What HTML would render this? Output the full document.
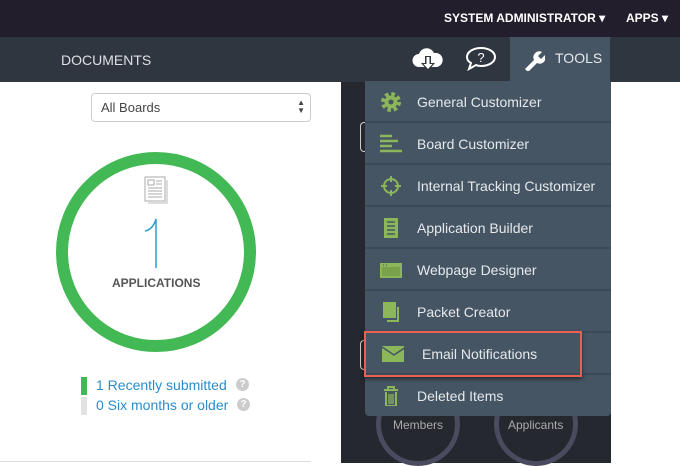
<!DOCTYPE html>
<html><head><style>
*{margin:0;padding:0;box-sizing:border-box}
body{width:680px;height:463px;overflow:hidden;background:#fff;font-family:"Liberation Sans",sans-serif;position:relative}
.top{position:absolute;left:0;top:0;width:680px;height:37px;background:#221e2b;color:#fff;font-size:12px;font-weight:bold}
.nav{position:absolute;left:0;top:37px;width:680px;height:45px;background:#2f363f}
.dark{position:absolute;left:341px;top:82px;width:270px;height:381px;background:#25282f}
.menu{position:absolute;left:365px;top:81px;width:246px;height:335px;background:#455563;border-radius:0 0 4px 4px}
.item{position:absolute;left:0;width:246px;height:42px;border-bottom:2px solid #3c4a57;color:#e6e9ec;font-size:14px;line-height:42px;padding-left:52px}
.ic{position:absolute;left:15px;top:11px;width:22px;height:20px}
</style></head><body>
<div class="top">
<span style="position:absolute;left:444px;top:11px">SYSTEM ADMINISTRATOR ▾</span>
<span style="position:absolute;left:626px;top:11px">APPS ▾</span>
</div>
<div class="nav">
<span style="position:absolute;left:61px;top:15px;color:#dde0e4;font-size:14px">DOCUMENTS</span>
<svg style="position:absolute;left:412px;top:10px" width="32" height="26" viewBox="0 0 32 26"><path d="M7 20a6.5 6.5 0 0 1 0-13 8 8 0 0 1 15-1 7 7 0 0 1 3 14z" fill="#fff"/><path d="M13 9h6v7h4l-7 8-7-8h4z" fill="#2f363f"/><path d="M14.5 10h3v7h3l-4.5 5-4.5-5h3z" fill="#fff"/></svg>
<svg style="position:absolute;left:465px;top:9px" width="32" height="26" viewBox="0 0 32 26"><path d="M16 2C8 2 2 6 2 11c0 3 2 5 4 6l-2 6 7-4c2 1 3 1 5 1 8 0 14-4 14-9S24 2 16 2z" fill="none" stroke="#fff" stroke-width="2"/><text x="16" y="16" fill="#fff" font-size="13" text-anchor="middle" font-family="Liberation Sans">?</text></svg>
<div style="position:absolute;left:510px;top:0;width:100px;height:45px;background:#455563">
<svg style="position:absolute;left:13px;top:12px" width="22" height="22" viewBox="0 0 22 22"><path d="M2 20l9-9a6 6 0 0 1 8-8l-4 4 3 3 4-4a6 6 0 0 1-8 8l-9 9z" fill="#fff"/></svg>
<span style="position:absolute;left:45px;top:13px;color:#e6e9ec;font-size:14px">TOOLS</span>
</div>
</div>
<div class="dark">
<div style="position:absolute;left:19px;top:40px;width:10px;height:30px;border:1px solid #ccc;border-right:none;border-radius:4px 0 0 4px"></div>
<div style="position:absolute;left:19px;top:258px;width:10px;height:30px;border:1px solid #ccc;border-right:none;border-radius:4px 0 0 4px"></div>
<div style="position:absolute;left:35px;top:300px;width:84px;height:84px;border:5px solid #4a4b5e;border-radius:50%"></div>
<div style="position:absolute;left:153px;top:300px;width:84px;height:84px;border:5px solid #4a4b5e;border-radius:50%"></div>
<span style="position:absolute;left:52px;top:336px;color:#aaa;font-size:12px">Members</span>
<span style="position:absolute;left:167px;top:336px;color:#aaa;font-size:12px">Applicants</span>
</div>
<div class="menu">
<div class="item" style="top:0"><svg class="ic" viewBox="0 0 22 20"><circle cx="11" cy="10" r="8" fill="none" stroke="#8cb65a" stroke-width="4" stroke-dasharray="3.5 2.8"/><circle cx="11" cy="10" r="6.5" fill="#8cb65a"/><circle cx="11" cy="10" r="2.5" fill="#455563"/></svg>General Customizer</div>
<div class="item" style="top:42px"><svg class="ic" viewBox="0 0 22 20"><path d="M0 2h12M0 7h18M0 12h12M0 17h22" stroke="#8cb65a" stroke-width="2.5"/></svg>Board Customizer</div>
<div class="item" style="top:84px"><svg class="ic" viewBox="0 0 22 20"><circle cx="11" cy="10" r="7" fill="none" stroke="#8cb65a" stroke-width="2"/><path d="M11 0v6M11 14v6M1 10h6M15 10h6" stroke="#8cb65a" stroke-width="2"/></svg>Internal Tracking Customizer</div>
<div class="item" style="top:126px"><svg class="ic" viewBox="0 0 22 20"><rect x="4" y="0" width="14" height="20" fill="#8cb65a"/><path d="M7 4h8M7 8h8M7 12h8M7 16h8" stroke="#455563" stroke-width="1.5"/></svg>Application Builder</div>
<div class="item" style="top:168px"><svg class="ic" viewBox="0 0 22 20"><rect x="0" y="3" width="22" height="15" fill="#8cb65a"/><rect x="2" y="7" width="18" height="9" fill="#7aa24c"/><path d="M3 5h1M6 5h1" stroke="#455563"/></svg>Webpage Designer</div>
<div class="item" style="top:210px"><svg class="ic" viewBox="0 0 22 20"><rect x="3" y="0" width="13" height="16" fill="#8cb65a"/><path d="M18 5v14H7" stroke="#8cb65a" stroke-width="2" fill="none"/></svg>Packet Creator</div>
<div class="item" style="top:252px"><svg class="ic" style="left:17px" viewBox="0 0 22 20"><rect x="0" y="2" width="24" height="16" fill="#8cb65a"/><path d="M0 3l12 8 12-8" stroke="#455563" stroke-width="1.5" fill="none"/></svg><span style="padding-left:5px">Email Notifications</span></div>
<div class="item" style="top:294px;border:none"><svg class="ic" viewBox="0 0 22 20"><path d="M4 4h14M8 4V1h6v3M6 6v14h10V6" stroke="#8cb65a" stroke-width="2" fill="none"/><path d="M9 8v10M11 8v10M13 8v10" stroke="#8cb65a" stroke-width="1.3"/></svg>Deleted Items</div>
</div>
<div style="position:absolute;left:364px;top:331px;width:218px;height:46px;border:2px solid #e8604f;box-shadow:0 2px 4px rgba(0,0,0,.5)"></div>
<div style="position:absolute;left:91px;top:93px;width:220px;height:29px;border:1px solid #ccc;border-radius:4px;font-size:13px;color:#444;padding:6px 9px">All Boards<span style="position:absolute;right:5px;top:5px;font-size:8px;line-height:8px">▲<br>▼</span></div>
<div style="position:absolute;left:56px;top:152px;width:200px;height:200px;border:12px solid #43b955;border-radius:50%"></div>
<svg style="position:absolute;left:144px;top:176px" width="24" height="28" viewBox="0 0 24 28"><rect x="1" y="1" width="20" height="24" fill="#fff" stroke="#aaa"/><path d="M23 4v23H4" stroke="#bbb" fill="none"/><rect x="4" y="4" width="6" height="5" fill="none" stroke="#aaa"/><path d="M12 5h6M12 8h6M4 12h14M4 15h14M4 18h14M4 21h14" stroke="#aaa"/></svg>
<svg style="position:absolute;left:140px;top:216px" width="24" height="52" viewBox="0 0 24 52"><path d="M5 15c5-1 9-5 11-12v49" stroke="#2a9fd0" stroke-width="1.5" fill="none"/></svg>
<div style="position:absolute;left:112px;top:276px;font-size:12px;font-weight:bold;color:#555">APPLICATIONS</div>
<div style="position:absolute;left:81px;top:377px;width:6px;height:18px;background:#43b955"></div>
<div style="position:absolute;left:81px;top:397px;width:6px;height:18px;background:#e2e2e2"></div>
<div style="position:absolute;left:96px;top:377px;font-size:14px;color:#2a8ccc">1 Recently submitted</div>
<div style="position:absolute;left:96px;top:397px;font-size:14px;color:#2a8ccc">0 Six months or older</div>
<div style="position:absolute;left:236px;top:378px;width:13px;height:13px;border-radius:50%;background:#ccc;color:#fff;font-size:10px;text-align:center;line-height:13px;font-weight:bold">?</div>
<div style="position:absolute;left:237px;top:398px;width:13px;height:13px;border-radius:50%;background:#ccc;color:#fff;font-size:10px;text-align:center;line-height:13px;font-weight:bold">?</div>
<div style="position:absolute;left:0;top:461px;width:311px;height:1px;background:#ddd"></div>
</body></html>
